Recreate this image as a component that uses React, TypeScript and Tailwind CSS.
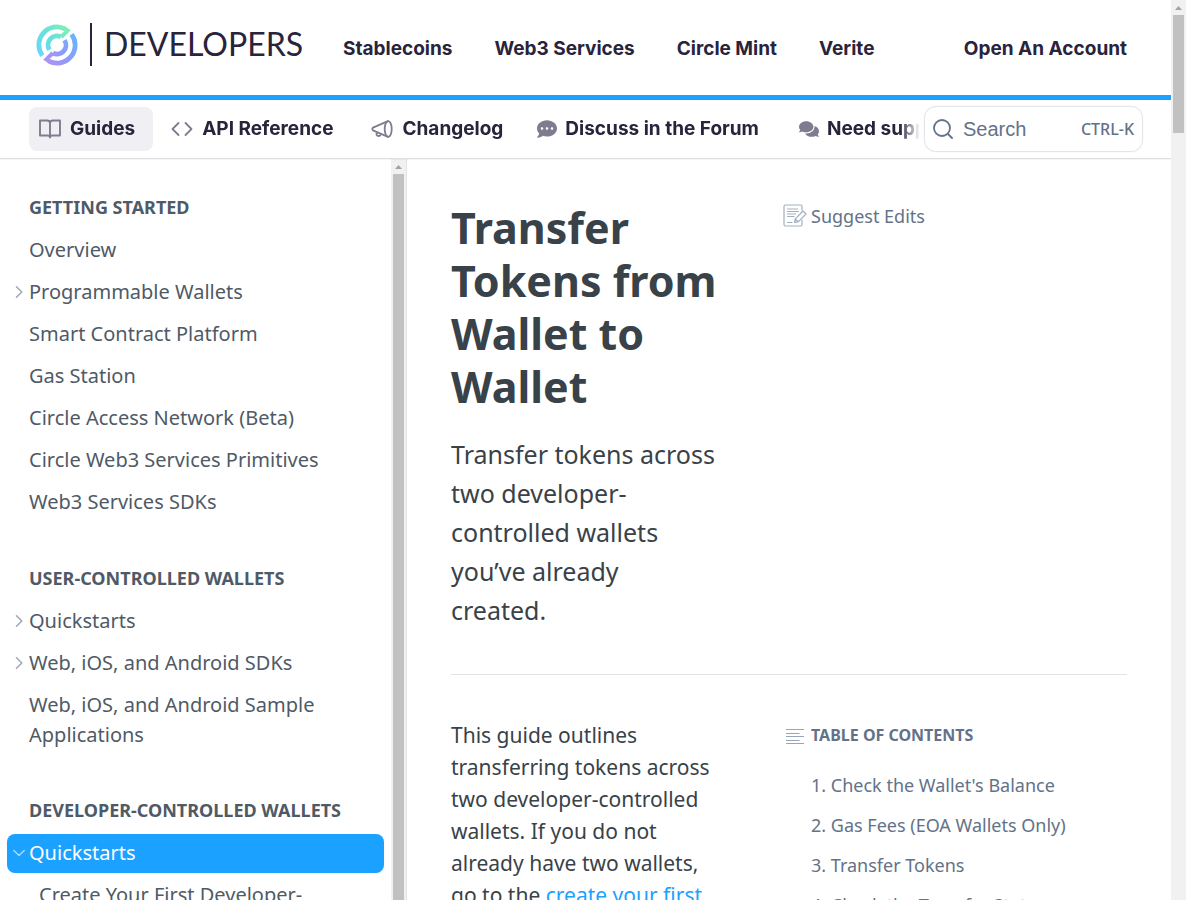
import React from "react";
import { FaCommentDots, FaComments } from "react-icons/fa";

const UI = "font-['Noto_Sans',sans-serif]";

function LogoMark() {
  return (
    <svg viewBox="0 0 42 42" className="h-[42px] w-[42px] shrink-0" fill="none" aria-hidden="true">
      <defs>
        <linearGradient id="mint" x1="4" y1="30" x2="32" y2="4" gradientUnits="userSpaceOnUse">
          <stop offset="0" stopColor="#68d7fa" />
          <stop offset="0.5" stopColor="#6ae0dc" />
          <stop offset="1" stopColor="#7ef1b3" />
        </linearGradient>
        <linearGradient id="violet" x1="10" y1="38" x2="38" y2="12" gradientUnits="userSpaceOnUse">
          <stop offset="0" stopColor="#b090f5" />
          <stop offset="0.5" stopColor="#8b9cfb" />
          <stop offset="1" stopColor="#68b5fa" />
        </linearGradient>
      </defs>
      <path d="M6.400 31.600A18 18 0 0 1 29.500 5.100" stroke="url(#mint)" strokeWidth="4.800" />
      <path d="M13.500 25.800A8.900 8.900 0 0 1 25 13" stroke="url(#mint)" strokeWidth="4.800" />
      <path d="M28.300 2L34.800 6.200L26.600 14.600L23.500 11.400L28.600 7Z" fill="url(#mint)" />
      <path d="M35.600 10.400A18 18 0 0 1 12.500 36.900" stroke="url(#violet)" strokeWidth="4.800" />
      <path d="M28.500 16.200A8.900 8.900 0 0 1 17 29" stroke="url(#violet)" strokeWidth="4.800" />
      <path d="M13.700 40L7.200 35.800L15.400 27.400L18.500 30.600L13.400 35Z" fill="url(#violet)" />
    </svg>
  );
}

function BookIcon() {
  return (
    <svg viewBox="0 0 22 20" className="h-5 w-[22px]" fill="none" stroke="#807c8f" strokeWidth="1.900" strokeLinejoin="round" strokeLinecap="round" aria-hidden="true">
      <path d="M1 1.500H8Q11 1.500 11 4Q11 1.500 14 1.500H21V16.500H13.500Q11 16.500 11 18.600Q11 16.500 8.500 16.500H1Z M11 4V18" />
    </svg>
  );
}

function CodeIcon() {
  return (
    <svg viewBox="0 0 22 16" className="h-4 w-[22px]" fill="none" stroke="#807c8f" strokeWidth="1.800" strokeLinecap="round" strokeLinejoin="round" aria-hidden="true">
      <path d="M7.500 2L1.500 8L7.500 14M14.500 2L20.500 8L14.500 14" />
    </svg>
  );
}

function MegaphoneIcon() {
  return (
    <svg viewBox="0 0 22 18" className="h-[18px] w-[22px]" fill="none" stroke="#807c8f" strokeWidth="1.800" strokeLinecap="round" strokeLinejoin="round" aria-hidden="true">
      <ellipse cx="17.200" cy="9" rx="3.500" ry="7.800" />
      <path d="M17 1.200L2 7.600Q0.600 9 2 10.400L17 16.800M5.600 12.200Q5 16 7.500 16Q9.500 16 9.600 14" />
    </svg>
  );
}

function SearchIcon() {
  return (
    <svg viewBox="0 0 20 20" className="h-5 w-5 shrink-0" fill="none" stroke="#637288" strokeWidth="1.800" strokeLinecap="round" aria-hidden="true">
      <circle cx="9" cy="9" r="8" />
      <path d="M15 15L19 19" />
    </svg>
  );
}

function EditIcon() {
  return (
    <svg viewBox="0 0 24 24" className="h-6 w-6 shrink-0" fill="none" stroke="#a3afc0" strokeWidth="1.200" strokeLinecap="round" strokeLinejoin="round" aria-hidden="true">
      <path d="M19 6V2.500Q19 1 17.500 1H2.500Q1 1 1 2.500V20.500Q1 22 2.500 22H17.500Q19 22 19 20.500V16" />
      <path d="M4.500 5H14.500M4.500 7.500H15.500M4.500 10H12.500M4.500 12.500H11M4.500 18.500H9" />
      <path d="M11.500 18.500L12.300 14.800L20 7L23 10L15.200 17.800ZM12.300 14.800L15.200 17.800" />
    </svg>
  );
}

function TocIcon() {
  return (
    <svg viewBox="0 0 20 18" className="mt-1 h-[18px] w-5 shrink-0" stroke="#97a5b9" strokeWidth="1" aria-hidden="true">
      <path d="M1 1.500H19M1 5.500H14.500M1 8.500H19M1 12.500H14.500M1 15.500H19" />
    </svg>
  );
}

function Chevron({ open }: { open?: boolean }) {
  return (
    <svg viewBox="0 0 12 12" className="h-3 w-3 shrink-0" fill="none" stroke={open ? "#a3dafF" : "#a0a7b0"} strokeWidth="1.500" strokeLinecap="round" strokeLinejoin="round" aria-hidden="true">
      <path d={open ? "M0.800 3.500L6 8.500L11.200 3.500" : "M3.500 0.800L8.800 6L3.500 11.200"} />
    </svg>
  );
}

function Scrollbar({ thumb }: { thumb: string }) {
  return (
    <div className="flex w-[15px] shrink-0 flex-col items-center bg-[#f1f1f1]" aria-hidden="true">
      <div className="flex h-[15px] shrink-0 items-center">
        <svg viewBox="0 0 7 4" className="h-1 w-[7px]" fill="#a3a3a3"><path d="M3.500 0L7 4H0Z" /></svg>
      </div>
      <div className={`w-[11px] bg-[#c1c1c1] ${thumb}`} />
    </div>
  );
}

type Item = { label: string; nested?: boolean; active?: boolean };

const sections: { title: string; items: Item[] }[] = [
  {
    title: "GETTING STARTED",
    items: [
      { label: "Overview" },
      { label: "Programmable Wallets", nested: true },
      { label: "Smart Contract Platform" },
      { label: "Gas Station" },
      { label: "Circle Access Network (Beta)" },
      { label: "Circle Web3 Services Primitives" },
      { label: "Web3 Services SDKs" },
    ],
  },
  {
    title: "USER-CONTROLLED WALLETS",
    items: [
      { label: "Quickstarts", nested: true },
      { label: "Web, iOS, and Android SDKs", nested: true },
      { label: "Web, iOS, and Android Sample Applications" },
    ],
  },
  {
    title: "DEVELOPER-CONTROLLED WALLETS",
    items: [{ label: "Quickstarts", nested: true, active: true }],
  },
];

const toc = ["1. Check the Wallet's Balance", "2. Gas Fees (EOA Wallets Only)", "3. Transfer Tokens", "4. Check the Transfer State"];

export default function App() {
  return (
    <div className={`flex h-screen overflow-hidden bg-white ${UI}`}>
      <div className="flex min-w-0 flex-1 flex-col">
        <header className="flex h-[100px] shrink-0 items-center border-b-[5px] border-[#1ba1ff] pr-11 pl-9 font-['Inter',sans-serif] text-[19px] font-bold text-[#29233b]">
          <a href="#home" className="flex items-center pb-1.5">
            <LogoMark />
            <span className="ml-3 h-[43px] w-0.5 bg-[#29233b]" />
            <span className="ml-3 w-[215px] pb-0.5 font-['Lato',sans-serif] text-[32px] leading-10 font-normal">DEVELOPERS</span>
          </a>
          <nav className="ml-6 flex flex-1 items-center gap-[42px] pt-1 whitespace-nowrap">
            <a href="#stablecoins">Stablecoins</a>
            <a href="#web3">Web3 Services</a>
            <a href="#mint">Circle Mint</a>
            <a href="#verite">Verite</a>
            <a href="#account" className="ml-auto">Open An Account</a>
          </nav>
        </header>

        <div className="z-10 flex h-[59px] shrink-0 items-center border-b border-[#dfdfdf] pr-7 pl-[29px] shadow-[0_1px_1px_rgba(0,0,0,0.04)]">
          <nav className="flex min-w-0 flex-1 items-center overflow-hidden font-['Inter',sans-serif] text-[19px] font-bold whitespace-nowrap text-[#29233b] [mask-image:linear-gradient(to_right,black_calc(100%-20px),transparent)]">
            <a href="#guides" className="flex h-11 items-center gap-[9px] rounded-lg bg-[#f0eff4] pr-[18px] pl-2.5"><BookIcon />Guides</a>
            <a href="#api" className="ml-[18px] flex items-center gap-[9px]"><CodeIcon />API Reference</a>
            <a href="#changelog" className="ml-[38px] flex items-center gap-[9px]"><MegaphoneIcon />Changelog</a>
            <a href="#forum" className="ml-[34px] flex items-center gap-2"><FaCommentDots className="h-5 w-5 text-[#807c8f]" />Discuss in the Forum</a>
            <a href="#support" className="ml-10 flex items-center gap-2"><FaComments className="h-5 w-5 text-[#807c8f]" />Need support?</a>
          </nav>
          <button type="button" className="ml-1 flex h-[46px] w-[219px] shrink-0 items-center rounded-xl border border-[#e3e5e8] px-2 text-[#637288] shadow-[0_0_1px_rgba(0,0,0,0.15)]">
            <SearchIcon />
            <span className="ml-2.5 font-['Liberation_Sans',sans-serif] text-xl">Search</span>
            <span className="ml-auto text-base font-medium">CTRL-K</span>
          </button>
        </div>

        <div className="flex min-h-0 flex-1">
          <aside className="flex w-[407px] shrink-0 border-r border-[#e3e3e3]">
            <nav className="min-w-0 flex-1 overflow-hidden px-[7px] pt-7 text-xl text-[#4f5a66]">
              {sections.map((s) => (
                <section key={s.title} className="mb-9">
                  <h2 className="mb-2 pt-1 pl-[22px] text-lg leading-8 font-bold">{s.title}</h2>
                  <ul>
                    {s.items.map((it) => (
                      <li key={it.label} className="mb-[3px]">
                        <a href="#page" className={`flex min-h-[39px] items-start rounded-lg py-1 pr-6 leading-[30px] ${it.active ? "bg-[#1ba1ff] text-white" : ""}`}>
                          <span className="flex h-[30px] w-[22px] shrink-0 items-center pl-1.5">{it.nested && <Chevron open={it.active} />}</span>
                          <span>{it.label}</span>
                        </a>
                      </li>
                    ))}
                    {s.items.some((it) => it.active) && (
                      <li><a href="#first" className="block py-1 pl-8 leading-[30px]">Create Your First Developer-<br />Controlled Wallet</a></li>
                    )}
                  </ul>
                </section>
              ))}
            </nav>
            <Scrollbar thumb="flex-1" />
          </aside>

          <main className="min-w-0 flex-1 overflow-hidden px-11 text-[#384248]">
            <div className="flex justify-between border-b border-[#e3e3e3] pt-[42px] pb-11">
              <div className="w-[268px]">
                <h1 className="text-[43px] leading-[53px] font-bold">Transfer Tokens from Wallet to Wallet</h1>
                <p className="mt-[22px] text-[25px] leading-[39px]">Transfer tokens across two developer-controlled wallets you’ve already created.</p>
              </div>
              <a href="#edit" className="flex w-[344px] items-center gap-1 self-start pt-px text-lg leading-7 text-[#637288]"><EditIcon />Suggest Edits</a>
            </div>
            <div className="flex justify-between pt-11">
              <p className="w-[268px] text-[21px] leading-8">
                This guide outlines transferring tokens across two developer-controlled wallets. If you do not already have two wallets, go to the <a href="#create" className="text-[#1ba1ff]">create your first developer-controlled wallet</a> guide.
              </p>
              <nav className="w-[344px] text-lg text-[#637288]">
                <h2 className="flex items-center gap-1.5 pl-0.5 text-base leading-8 font-bold"><TocIcon />TABLE OF CONTENTS</h2>
                <ol className="mt-3.5 pl-7">
                  {toc.map((t) => <li key={t}><a href="#step" className="block leading-10">{t}</a></li>)}
                </ol>
              </nav>
            </div>
          </main>
        </div>
      </div>
      <Scrollbar thumb="h-[118px]" />
    </div>
  );
}
